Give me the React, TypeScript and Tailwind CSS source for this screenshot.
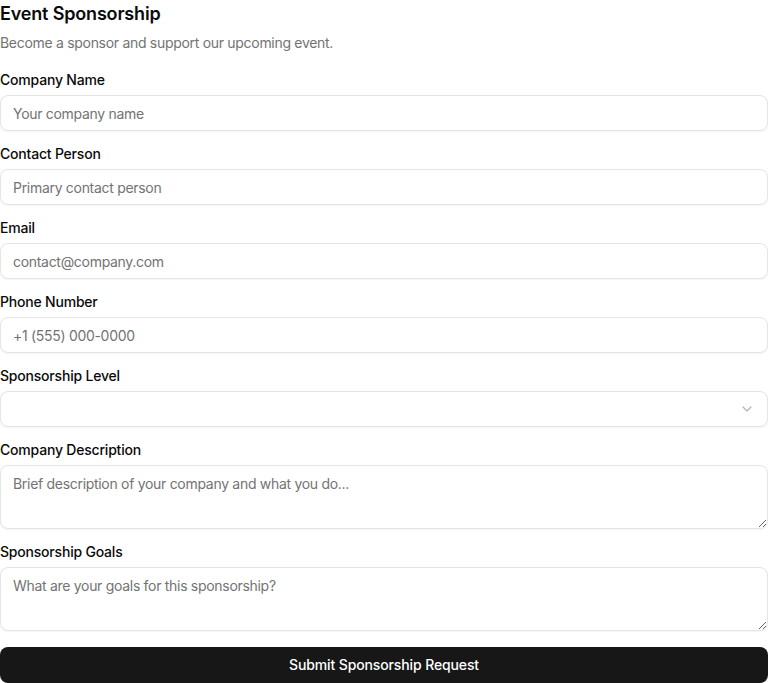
import React from 'react';
import { ChevronDown } from 'lucide-react';

const inputCls =
  'h-9 w-full rounded-lg border border-[#e5e5e5] bg-white px-3 text-sm tracking-[-0.3px] text-[#0a0a0a] shadow-[0_1px_2px_0_rgba(0,0,0,0.05)] outline-none placeholder:text-[#737373]';

const textareaCls =
  'block min-h-16 h-16 w-full rounded-lg border border-[#e5e5e5] bg-white px-3 py-2 text-sm leading-5 tracking-[-0.3px] text-[#0a0a0a] shadow-[0_1px_2px_0_rgba(0,0,0,0.05)] outline-none placeholder:text-[#737373]';

const Field = ({ label, children }: { label: string; children: React.ReactNode }) => (
  <div className="flex flex-col gap-2">
    <label className="text-sm font-medium leading-none tracking-[-0.2px] text-[#0a0a0a]">
      {label}
    </label>
    {children}
  </div>
);

export default function App() {
  return (
    <div className="w-[768px] bg-white font-['Inter',sans-serif] text-[#0a0a0a]">
      <h1 className="text-lg font-semibold leading-7 tracking-[-0.17px]">Event Sponsorship</h1>
      <p className="mt-[5px] text-sm leading-5 tracking-[-0.3px] text-[#737373]">
        Become a sponsor and support our upcoming event.
      </p>

      <form className="mt-5 flex flex-col gap-4" onSubmit={(e) => e.preventDefault()}>
        <Field label="Company Name">
          <input className={inputCls} placeholder="Your company name" />
        </Field>
        <Field label="Contact Person">
          <input className={inputCls} placeholder="Primary contact person" />
        </Field>
        <Field label="Email">
          <input className={inputCls} placeholder="contact@company.com" />
        </Field>
        <Field label="Phone Number">
          <input className={inputCls} placeholder="+1 (555) 000-0000" />
        </Field>
        <Field label="Sponsorship Level">
          <button
            type="button"
            className="flex h-9 w-full items-center justify-end rounded-lg border border-[#e5e5e5] bg-white px-3 shadow-[0_1px_2px_0_rgba(0,0,0,0.05)]"
          >
            <ChevronDown className="h-4 w-4 text-[#737373] opacity-50" />
          </button>
        </Field>
        <Field label="Company Description">
          <textarea
            className={textareaCls}
            placeholder="Brief description of your company and what you do..."
          />
        </Field>
        <Field label="Sponsorship Goals">
          <textarea
            className={textareaCls}
            placeholder="What are your goals for this sponsorship?"
          />
        </Field>
        <button
          type="submit"
          className="h-9 w-full rounded-lg bg-[#171717] text-sm font-medium tracking-[-0.12px] text-white"
        >
          Submit Sponsorship Request
        </button>
      </form>
    </div>
  );
}
